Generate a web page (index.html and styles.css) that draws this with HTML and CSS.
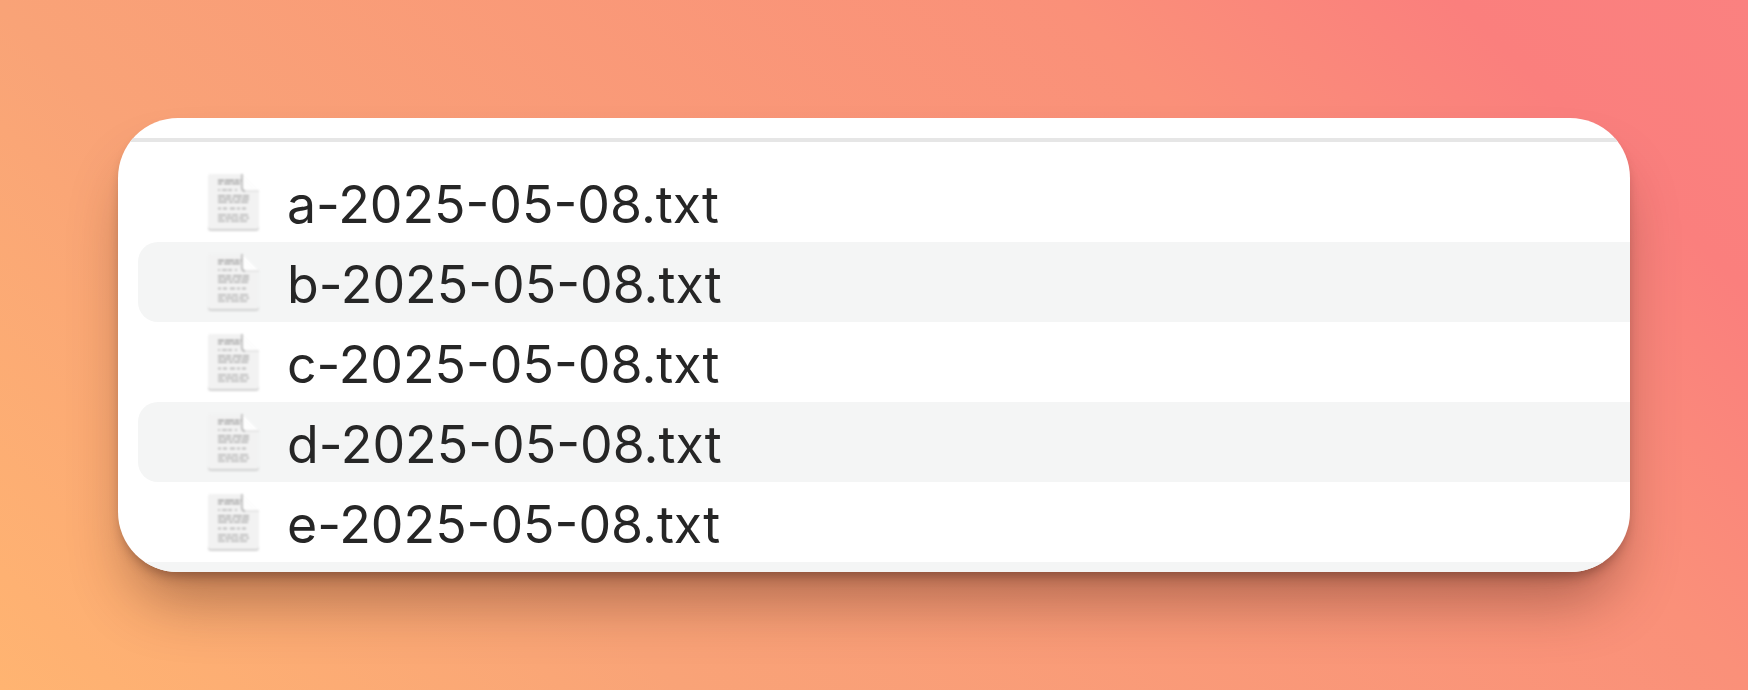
FILE: index.html
```html
<!DOCTYPE html>
<html lang="en">
<head>
<meta charset="utf-8">
<title>Files</title>
<link rel="stylesheet" href="styles.css">
</head>
<body>
<svg class="defs" width="0" height="0" aria-hidden="true">
  <symbol id="doc" viewBox="0 0 54 60">
    <path d="M4 3h31l17 17v36a3 3 0 0 1-3 3H4a3 3 0 0 1-3-3V6a3 3 0 0 1 3-3z" fill="#d2d2d2"/>
    <path d="M4 2h31l17 17v35a3 3 0 0 1-3 3H4a3 3 0 0 1-3-3V5a3 3 0 0 1 3-3z" fill="#f2f2f2"/>
    <g fill="none" stroke-width="1.700">
      <path d="M11 8.500h23" stroke="#929292" stroke-dasharray="6 1 9 1 4 1"/>
      <path d="M11 11.500h23" stroke="#9e9e9e" stroke-dasharray="4 2 7 1 8 1"/>
      <path d="M11 18h21" stroke="#b4b4b4" stroke-dasharray="2 2 5 1 4 3"/>
      <path d="M11 24h31" stroke="#a4a4a4" stroke-dasharray="7 1 5 2 9 1"/>
      <path d="M11 27h31" stroke="#aaa" stroke-dasharray="4 1 8 1 3 2"/>
      <path d="M11 30h30" stroke="#acacac" stroke-dasharray="9 2 4 1 6 1"/>
      <path d="M11 36.500h29" stroke="#acacac" stroke-dasharray="3 2 4 3 5 2"/>
      <path d="M11 43h31" stroke="#b0b0b0" stroke-dasharray="8 1 4 1 6 2"/>
      <path d="M11 46h31" stroke="#b0b0b0" stroke-dasharray="5 2 9 1 3 1"/>
      <path d="M11 49h29" stroke="#b4b4b4" stroke-dasharray="7 1 3 2 8 1"/>
    </g>
    <path d="M35 2l17 17H38a3 3 0 0 1-3-3z" fill="#fefefe"/>
    <path d="M35 2v14a3 3 0 0 0 3 3" fill="none" stroke="#a8a8a8" stroke-width="1.300"/>
    <path d="M38 19h14" fill="none" stroke="#d6d6d6" stroke-width="1"/>
  </symbol>
</svg>
<main class="window">
  <div class="toolbar"></div>
  <ul class="file-list">
    <li class="file-row"><svg class="file-icon"><use href="#doc"/></svg><span class="file-name">a-2025-05-08.txt</span></li>
    <li class="file-row is-alt"><svg class="file-icon"><use href="#doc"/></svg><span class="file-name">b-2025-05-08.txt</span></li>
    <li class="file-row"><svg class="file-icon"><use href="#doc"/></svg><span class="file-name">c-2025-05-08.txt</span></li>
    <li class="file-row is-alt"><svg class="file-icon"><use href="#doc"/></svg><span class="file-name">d-2025-05-08.txt</span></li>
    <li class="file-row"><svg class="file-icon"><use href="#doc"/></svg><span class="file-name">e-2025-05-08.txt</span></li>
  </ul>
  <div class="footer-strip"></div>
</main>
</body>
</html>
```
FILE: styles.css
```css
* { box-sizing: border-box; }
html, body { margin: 0; height: 100%; }
body {
  width: 1748px;
  height: 690px;
  padding: 118px;
  overflow: hidden;
  background: linear-gradient(45deg, #ffb471 0%, #f9a377 28%, #fa9079 72%, #fa7f7d 88%, #fa8180 100%);
  font-family: "Inter", "Liberation Sans", sans-serif;
}
.defs { position: absolute; }
.window {
  display: flex;
  flex-direction: column;
  height: 454px;
  background: #fff;
  border-radius: 60px;
  overflow: hidden;
  box-shadow: 0 8px 12px -4px rgba(70, 30, 20, 0.4), 0 40px 60px -14px rgba(70, 30, 20, 0.42);
}
.toolbar {
  height: 24px;
  flex: none;
  border-bottom: 4px solid #e6e6e6;
}
.file-list {
  list-style: none;
  margin: 20px 0 0;
  padding: 0 0 0 20px;
  flex: none;
}
.file-row {
  display: flex;
  align-items: center;
  height: 80px;
  padding-left: 69px;
  gap: 26px;
  border-radius: 20px 0 0 20px;
}
.is-alt { background: #f4f5f5; }
.file-icon {
  width: 54px;
  height: 60px;
  flex: none;
  filter: blur(0.8px);
}
.file-name {
  font-size: 51.800px;
  line-height: 80px;
  padding-top: 3px;
  color: #262626;
  filter: blur(0.4px);
}
.footer-strip {
  flex: 1;
  background: #f4f5f5;
}
```
